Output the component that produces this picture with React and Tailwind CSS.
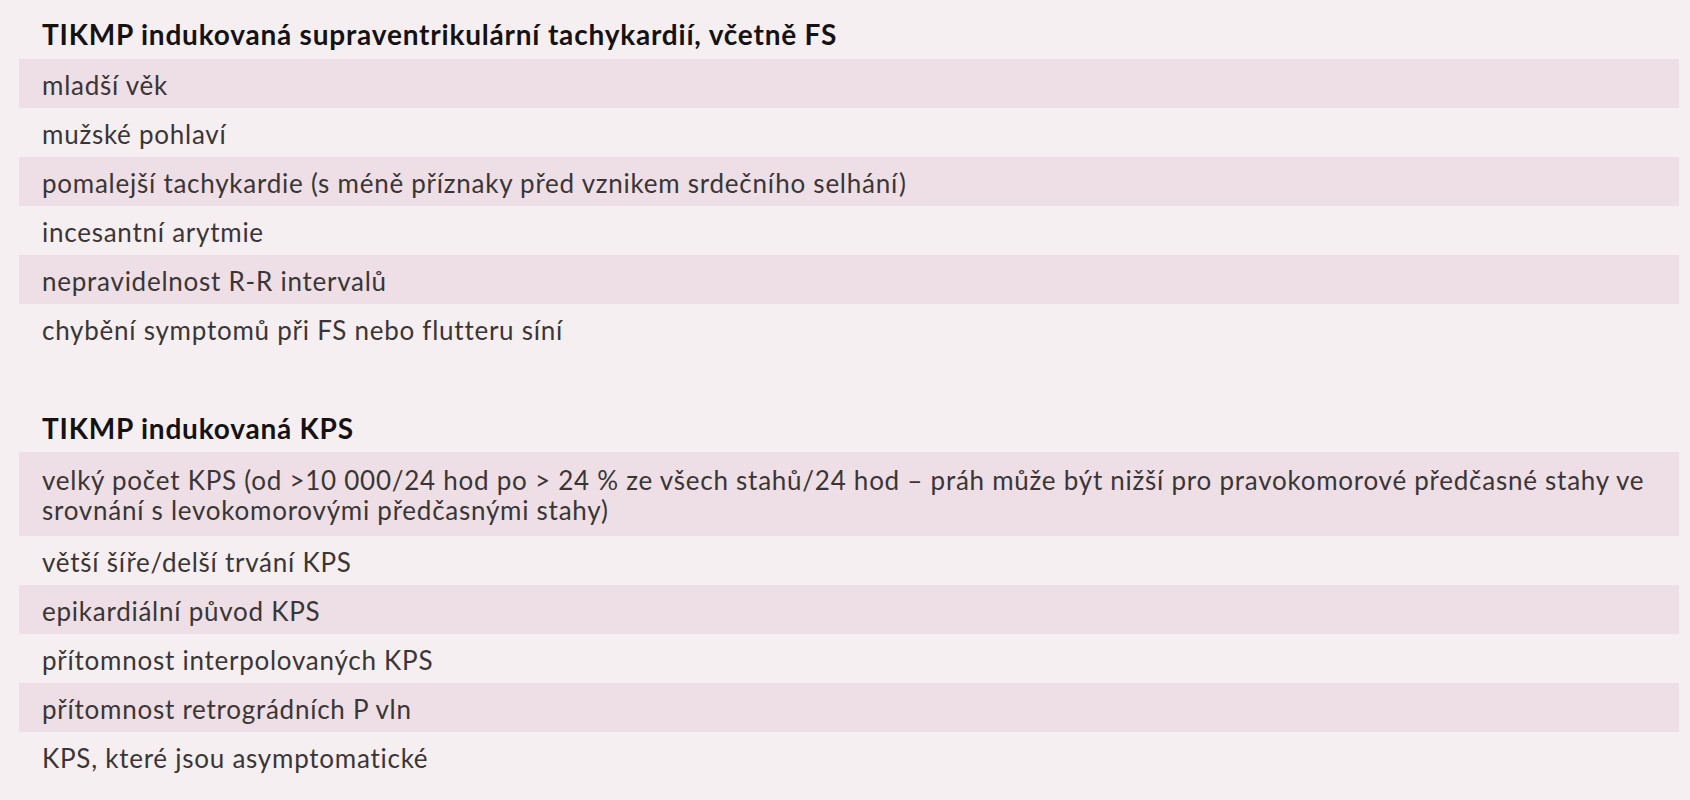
import React from "react";

const sec1 = [
  "mladší věk",
  "mužské pohlaví",
  "pomalejší tachykardie (s méně příznaky před vznikem srdečního selhání)",
  "incesantní arytmie",
  "nepravidelnost R-R intervalů",
  "chybění symptomů při FS nebo flutteru síní",
];

const sec2rest = [
  "větší šíře/delší trvání KPS",
  "epikardiální původ KPS",
  "přítomnost interpolovaných KPS",
  "přítomnost retrográdních P vln",
  "KPS, které jsou asymptomatické",
];

function Row({ text, striped }) {
  return (
    <div
      className={`h-[49px] flex items-center pl-[23px] pt-[2px] ${striped ? "bg-[#eddfe5]" : ""}`}
    >
      {text}
    </div>
  );
}

export default function App() {
  return (
    <div
      className="w-[1690px] h-[800px] bg-[#f6eff2] text-[#3b3536] text-[26px] leading-[30px] tracking-[0.75px]"
      style={{ fontFamily: "Lato, 'Open Sans', sans-serif" }}
    >
      <div className="w-[1660px] ml-[19px] flex flex-col">
        <div className="h-[59px] flex items-center pl-[23px] pt-[8px] font-bold text-[28px] text-[#161213] tracking-[0.8px]">
          TIKMP indukovaná supraventrikulární tachykardií, včetně FS
        </div>
        {sec1.map((t, i) => (
          <Row key={i} text={t} striped={i % 2 === 0} />
        ))}
        <div className="h-[99px] flex items-end pb-[9px] pl-[23px] font-bold text-[28px] text-[#161213] tracking-[0.8px]">
          TIKMP indukovaná KPS
        </div>
        <div className="h-[84px] flex items-center pl-[23px] pt-[2px] bg-[#eddfe5]">
          <div>
            velký počet KPS (od &gt;10 000/24 hod po &gt; 24 % ze všech stahů/24 hod – práh může být nižší pro pravokomorové předčasné stahy ve
            <br />
            srovnání s levokomorovými předčasnými stahy)
          </div>
        </div>
        {sec2rest.map((t, i) => (
          <Row key={i} text={t} striped={i % 2 === 1} />
        ))}
      </div>
    </div>
  );
}
